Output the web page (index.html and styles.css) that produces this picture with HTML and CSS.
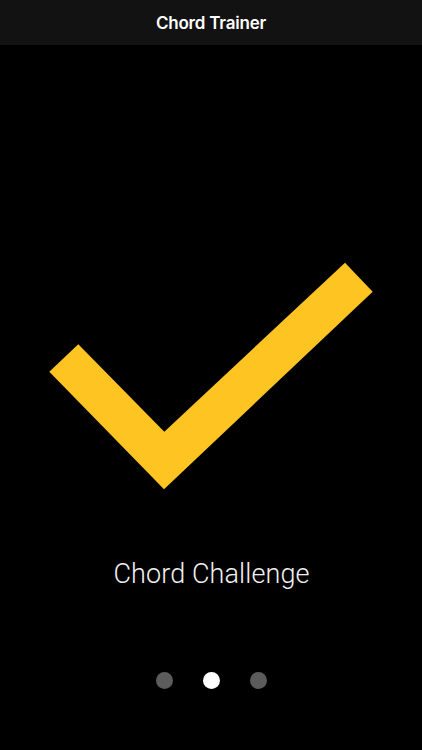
FILE: index.html
```html
<!DOCTYPE html>
<html>
<head>
<meta charset="utf-8">
<link rel="stylesheet" href="styles.css">
</head>
<body>
<header class="navbar"><span class="nav-title">Chord Trainer</span></header>
<main class="page">
  <svg class="check" width="422" height="250" viewBox="0 250 422 250">
    <polygon points="49.3,371.7 78.3,344.3 164.3,431.7 345,262.7 372.7,291.7 164,489.3" fill="#FEC421"/>
  </svg>
  <div class="caption">Chord Challenge</div>
  <div class="dots">
    <span class="dot"></span>
    <span class="dot active"></span>
    <span class="dot"></span>
  </div>
</main>
</body>
</html>
```
FILE: styles.css
```css
html, body {
  margin: 0;
  padding: 0;
  background: #000;
  width: 422px;
  height: 750px;
  overflow: hidden;
}
body {
  font-family: Roboto, "Liberation Sans", sans-serif;
  color: #fff;
}
.navbar {
  height: 45px;
  background: #121212;
  display: flex;
  align-items: center;
  justify-content: center;
}
.nav-title {
  font-family: Inter, Roboto, sans-serif;
  font-weight: 600;
  font-size: 17px;
  letter-spacing: -0.2px;
}
.page {
  display: flex;
  flex-direction: column;
  align-items: center;
}
.check {
  display: block;
  margin-top: 205px;
}
.caption {
  margin-top: 59px;
  height: 30px;
  line-height: 30px;
  font-size: 27px;
  font-weight: 300;
  letter-spacing: 0.1px;
  color: #f2f2f2;
  margin-left: 1px;
}
.dots {
  margin-top: 83px;
  display: flex;
  gap: 30px;
  margin-left: 1px;
}
.dot {
  width: 17px;
  height: 17px;
  border-radius: 50%;
  background: #5c5c5c;
}
.dot.active {
  background: #fff;
}
```
